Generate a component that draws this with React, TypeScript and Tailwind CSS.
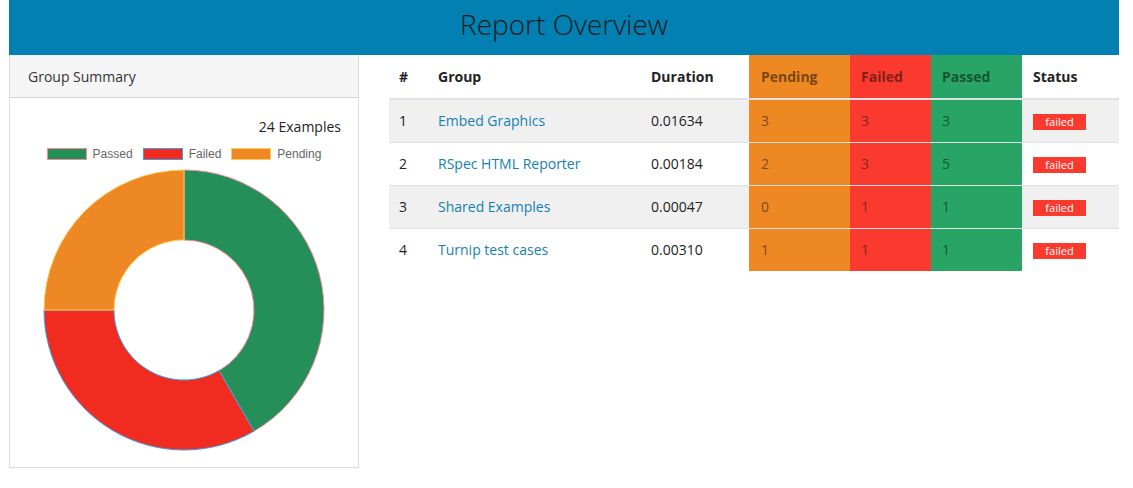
import React from 'react';

const rows = [
  { id: 1, group: 'Embed Graphics', duration: '0.01634', pending: 3, failed: 3, passed: 3 },
  { id: 2, group: 'RSpec HTML Reporter', duration: '0.00184', pending: 2, failed: 3, passed: 5 },
  { id: 3, group: 'Shared Examples', duration: '0.00047', pending: 0, failed: 1, passed: 1 },
  { id: 4, group: 'Turnip test cases', duration: '0.00310', pending: 1, failed: 1, passed: 1 },
];

function Donut() {
  return (
    <svg width="282" height="282" viewBox="0 0 282 282">
      {/* passed: 10 / 24 */}
      <path
        d="M141 1 A140 140 0 0 1 211 262.24 L176 201.62 A70 70 0 0 0 141 71 Z"
        fill="#258f5a"
        stroke="#f4899a"
        strokeWidth="1"
      />
      {/* failed: 8 / 24 */}
      <path
        d="M211 262.24 A140 140 0 0 1 1 141 L71 141 A70 70 0 0 0 176 201.62 Z"
        fill="#f12b20"
        stroke="#36a2eb"
        strokeWidth="1"
      />
      {/* pending: 6 / 24 */}
      <path
        d="M1 141 A140 140 0 0 1 141 1 L141 71 A70 70 0 0 0 71 141 Z"
        fill="#ed8824"
        stroke="#ffcd56"
        strokeWidth="1"
      />
    </svg>
  );
}

function LegendItem({ label, fill, border }: { label: string; fill: string; border: string }) {
  return (
    <div className="flex items-center gap-[6px]">
      <span className="block w-[40px] h-[12px] border" style={{ backgroundColor: fill, borderColor: border }} />
      <span>{label}</span>
    </div>
  );
}

export default function App() {
  return (
    <div className="w-[1133px] h-[488px] bg-white text-[#222] font-['Open_Sans',sans-serif]">
      <div className="ml-[9px] w-[1110px] h-[55px] bg-[#0380b2] flex justify-center pt-[8px]">
        <h1 className="text-[28px] font-light text-[#1a1a1a] leading-[32px]">Report Overview</h1>
      </div>

      <div className="ml-[9px] w-[1110px] flex gap-[30px]">
        {/* Group summary panel */}
        <div className="w-[350px] h-[413px] border border-t-0 border-[#dcdcdc] flex flex-col">
          <div className="h-[43px] bg-[#f5f5f5] border-b border-[#d5d5d5] flex items-center pl-[18px] text-[14px] text-[#333]">
            Group Summary
          </div>
          <div className="flex flex-col pt-[19px]">
            <div className="text-right pr-[17px] text-[14px] leading-[20px] text-[#222]">24 Examples</div>
            <div className="mt-[11px] flex justify-center gap-[10px] text-[12px] leading-[12px] text-[#666] font-['Liberation_Sans',sans-serif]">
              <LegendItem label="Passed" fill="#258f5a" border="#f4899a" />
              <LegendItem label="Failed" fill="#f12b20" border="#36a2eb" />
              <LegendItem label="Pending" fill="#ed8824" border="#ffcd56" />
            </div>
            <div className="mt-[9px] flex justify-center pr-[1px]">
              <Donut />
            </div>
          </div>
        </div>

        {/* Groups table */}
        <table className="w-[730px] table-fixed border-collapse text-[14px] self-start">
          <colgroup>
            <col className="w-[39px]" />
            <col className="w-[213px]" />
            <col className="w-[108px]" />
            <col className="w-[101px]" />
            <col className="w-[81px]" />
            <col className="w-[91px]" />
            <col className="w-[97px]" />
          </colgroup>
          <thead>
            <tr className="h-[44px] border-b-2 border-[#dee2e6] font-bold text-left">
              <th className="px-[10px] font-bold">#</th>
              <th className="px-[10px] font-bold">Group</th>
              <th className="px-[10px] font-bold">Duration</th>
              <th className="px-[12px] font-bold bg-[#ee8822] text-[#7a4612]">Pending</th>
              <th className="px-[11px] font-bold bg-[#fa3a2f] text-[#831e18]">Failed</th>
              <th className="px-[11px] font-bold bg-[#28a465] text-[#165433]">Passed</th>
              <th className="px-[11px] font-bold">Status</th>
            </tr>
          </thead>
          <tbody>
            {rows.map((r, i) => (
              <tr
                key={r.id}
                className={`h-[43px] border-t border-[#dee2e6] ${i % 2 === 0 ? 'bg-[#f0f0f0]' : 'bg-white'}`}
              >
                <td className="px-[10px]">{r.id}</td>
                <td className="px-[10px]">
                  <a className="text-[#1481b0]">{r.group}</a>
                </td>
                <td className="px-[10px]">{r.duration}</td>
                <td className="px-[12px] bg-[#ee8822] text-[#7f4a17]">{r.pending}</td>
                <td className="px-[11px] bg-[#fa3a2f] text-[#8a2620]">{r.failed}</td>
                <td className="px-[11px] bg-[#28a465] text-[#17573a]">{r.passed}</td>
                <td className="px-[11px]">
                  <span className="inline-flex items-center justify-center w-[53px] h-[16px] bg-[#fa3a2f] text-white text-[11px] leading-none">
                    failed
                  </span>
                </td>
              </tr>
            ))}
          </tbody>
        </table>
      </div>
    </div>
  );
}
